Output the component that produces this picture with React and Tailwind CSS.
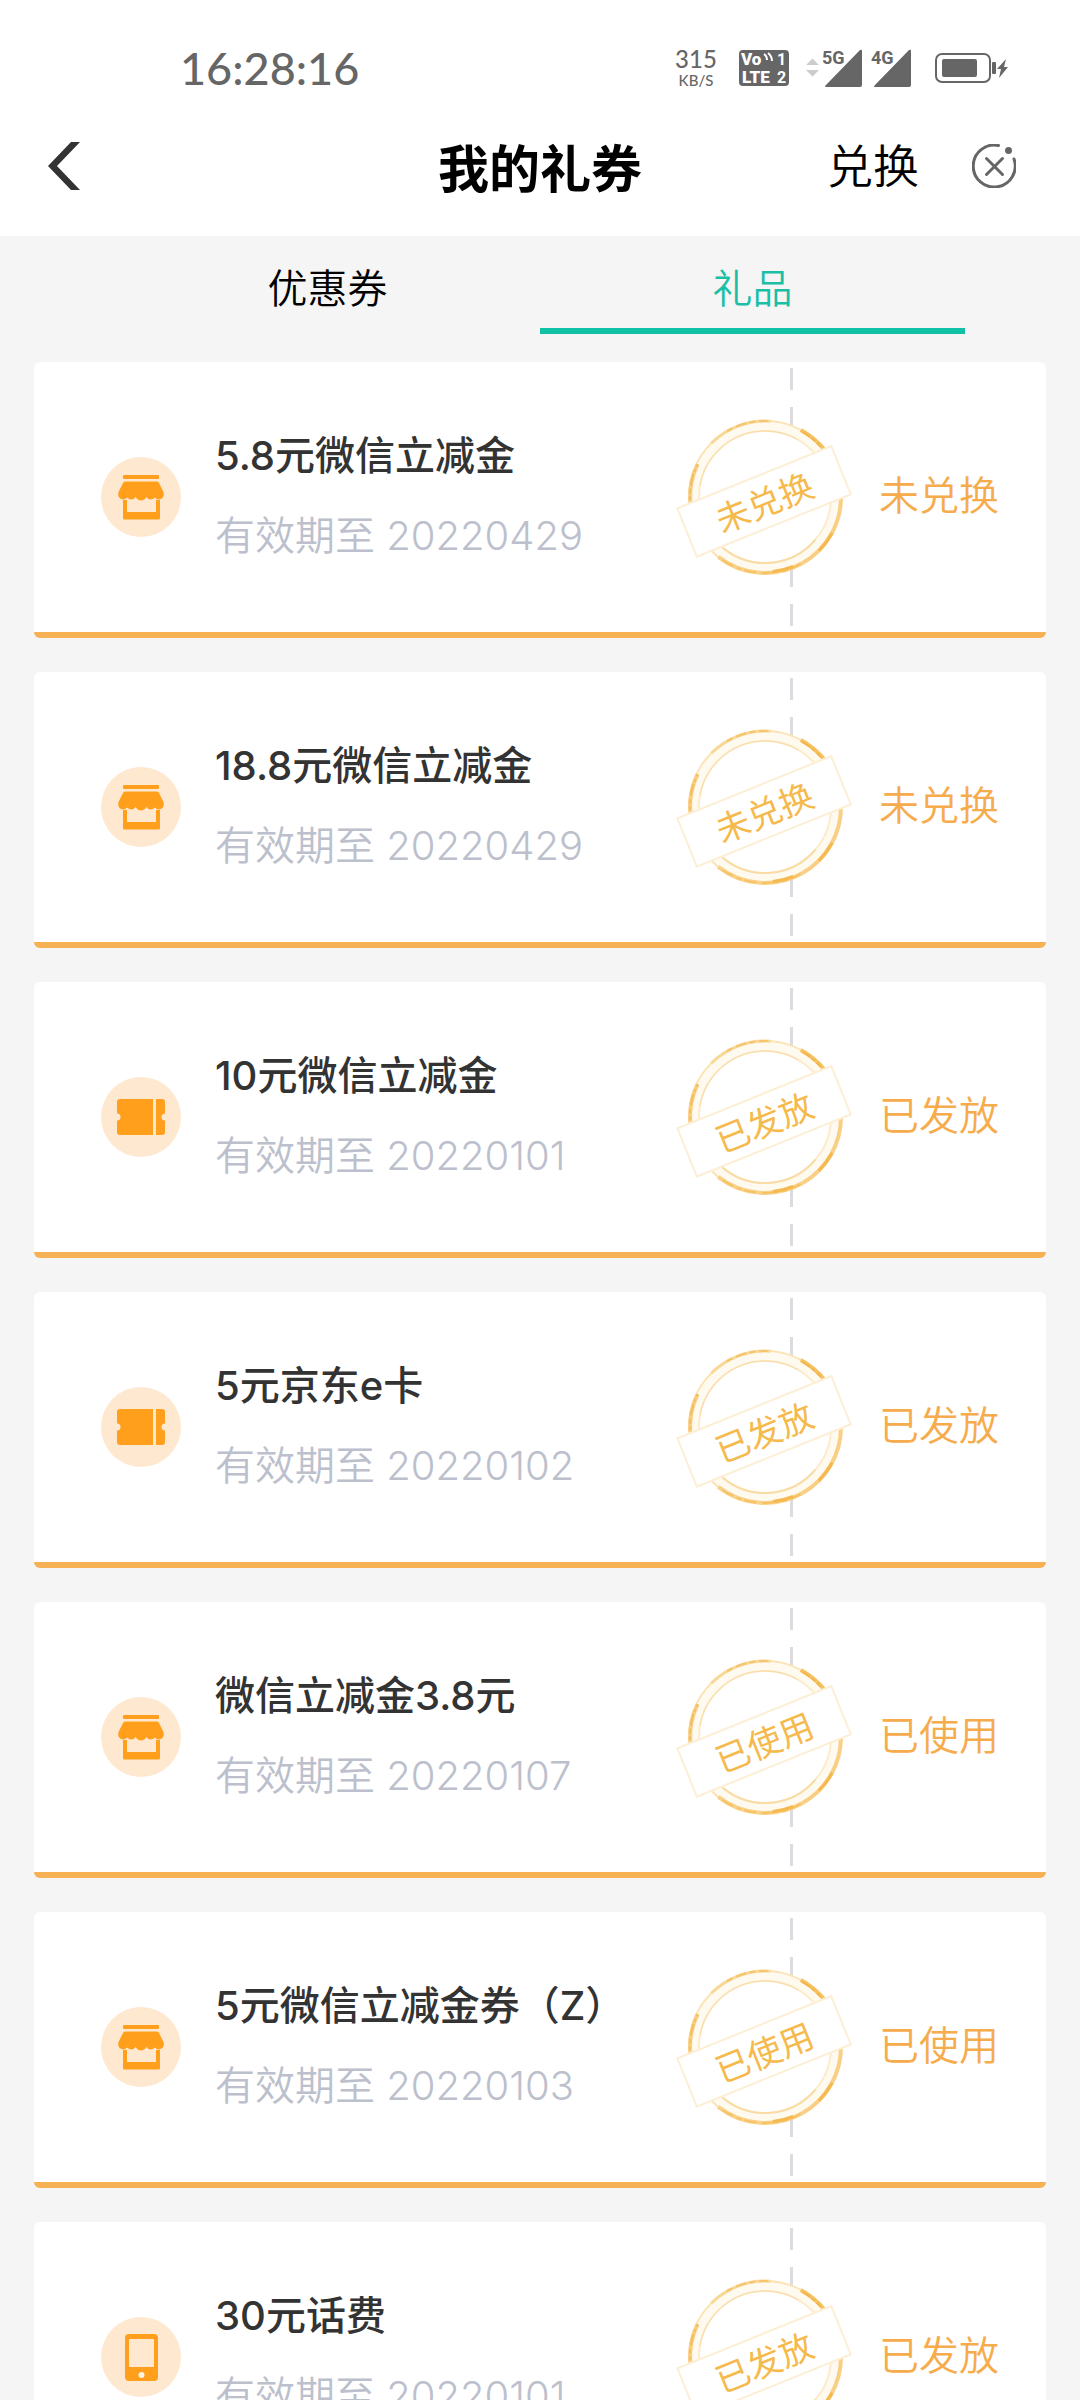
import React, { useState } from "react";

const gifts = [
  { icon: "store", title: "5.8元微信立减金", date: "20220429", status: "未兑换" },
  { icon: "store", title: "18.8元微信立减金", date: "20220429", status: "未兑换" },
  { icon: "ticket", title: "10元微信立减金", date: "20220101", status: "已发放" },
  { icon: "ticket", title: "5元京东e卡", date: "20220102", status: "已发放" },
  { icon: "store", title: "微信立减金3.8元", date: "20220107", status: "已使用" },
  { icon: "store", title: "5元微信立减金券（Z）", date: "20220103", status: "已使用" },
  { icon: "phone", title: "30元话费", date: "20220101", status: "已发放" },
];

function GiftIcon({ kind }) {
  return (
    <svg viewBox="0 0 80 80" className="size-20 shrink-0" aria-hidden="true">
      <circle cx="40" cy="40" r="40" fill="#ffe8d0" />
      {kind === "store" && (
        <g fill="#ff9f1c">
          <rect x="22" y="18" width="36" height="4" rx="1" />
          <path d="M24 24.500h32q1.500 0 2 1.500l4.500 9q1.500 6-4 7.500-3 .3-4.500-2-2 2-4.500 2T45.500 40q-2.500 3.500-5.500 3.500t-5.500-3.500Q33 42.500 30.500 42.500T26 40.500q-1.500 2.300-4.500 2-5.500-1.500-4-7.500l4.500-9q.5-1.500 2-1.500z" />
          <path d="M22 43h4v12h29V43h4v18q0 1.500-1.500 1.500h-34Q22 62.500 22 61z" />
        </g>
      )}
      {kind === "ticket" && (
        <g fill="#ff9f1c">
          <path d="M19 22h33v36H19q-3 0-3-3V43.500a3.500 3.500 0 0 0 0-7V25q0-3 3-3z" />
          <path d="M55 22h6q3 0 3 3v11.500a3.500 3.500 0 0 0 0 7V55q0 3-3 3h-6z" />
        </g>
      )}
      {kind === "phone" && (
        <>
          <rect x="24" y="17" width="33" height="47" rx="4" fill="#ff9f1c" />
          <rect x="28" y="22" width="25" height="28" rx="1" fill="#ffe8d0" />
          <circle cx="40.500" cy="58" r="3" fill="#fff3e4" />
        </>
      )}
    </svg>
  );
}

function arc(r, from, to) {
  const p = (a) => {
    const t = (a * Math.PI) / 180;
    return `${(90 + r * Math.cos(t)).toFixed(1)} ${(80 + r * Math.sin(t)).toFixed(1)}`;
  };
  return `M${p(from)}A${r} ${r} 0 0 1 ${p(to)}`;
}

function Stamp({ text }) {
  return (
    <svg viewBox="0 0 180 160" className="h-40 w-[180px]" role="img" aria-label={text}>
      <circle cx="90" cy="80" r="76" fill="#fff" />
      <g fill="none">
        <circle cx="90" cy="80" r="71" stroke="#fffaf0" strokeWidth="9" />
        <circle cx="90" cy="80" r="76" stroke="#fbe3b4" strokeWidth="2" />
        <circle cx="90" cy="80" r="66" stroke="#fdebcb" strokeWidth="2" />
        <path d={arc(66, 190, 300)} stroke="#f9dba4" strokeWidth="1" />
        <path d={arc(66, 40, 130)} stroke="#f9dba4" strokeWidth="2" />
        <path d={arc(76, 298, 322)} stroke="#f6c263" strokeWidth="4" />
        <path d={arc(75, 300, 318)} stroke="#f4b548" strokeWidth="2" strokeDasharray="9 2 4 3" />
        <path d={arc(76, 0, 60)} stroke="#f8cf85" strokeWidth="4" />
        <path d={arc(76, 28, 45)} stroke="#f5b94f" strokeWidth="3" />
        <path d={arc(76, 60, 128)} stroke="#f9d28a" strokeWidth="4" />
        <path d={arc(76, 62, 124)} stroke="#f6c263" strokeWidth="2" strokeDasharray="12 3 5 4 16 6" />
        <path d={arc(75, 68, 84)} stroke="#f5b94f" strokeWidth="3" />
        <path d={arc(75, 176, 206)} stroke="#f8cf85" strokeWidth="4" />
        <path d={arc(75, 178, 206)} stroke="#f5bd5c" strokeWidth="2" strokeDasharray="3 3 5 3 12 2" />
        <path d={arc(76, 225, 274)} stroke="#f9d795" strokeWidth="3" />
        <path d={arc(76, 240, 272)} stroke="#f5c46c" strokeWidth="2" strokeDasharray="6 4 11 3" />
      </g>
      <g transform="rotate(-22 90 84)">
        <rect x="6" y="58" width="166" height="52" fill="#fff" stroke="#fcefd6" strokeWidth="2" />
        <text x="89" y="98" textAnchor="middle" fontSize="34" fill="#f5b94c">
          {text}
        </text>
      </g>
    </svg>
  );
}

function GiftCard({ gift }) {
  return (
    <li className="relative flex h-[276px] shrink-0 items-center rounded-md border-b-[6px] border-[#f6b155] bg-white">
      <div className="flex min-w-0 flex-1 items-center gap-[34px] pl-[67px]">
        <GiftIcon kind={gift.icon} />
        <div className="whitespace-nowrap pb-[2px] text-[40px] leading-[80px]">
          <h2 className="font-medium text-[#333]">{gift.title}</h2>
          <p className="font-[350] text-[#bcc0cc]">有效期至 {gift.date}</p>
        </div>
      </div>
      <div className="flex h-full flex-col justify-between py-[6px]" aria-hidden="true">
        {[0, 1, 2, 3, 4, 5, 6].map((n) => (
          <span key={n} className="h-[22px] w-[3px] bg-[#dcdce0]" />
        ))}
      </div>
      <p className="w-[253px] pb-[2px] pl-[86px] text-[40px] leading-[80px] font-[350] text-[#f6ac4c]">{gift.status}</p>
      <div className="absolute top-1/2 right-[191px] -translate-y-1/2">
        <Stamp text={gift.status} />
      </div>
    </li>
  );
}

function StatusBar() {
  return (
    <div className="flex h-[90px] items-end justify-between pr-[71px] pl-[180px] text-[#666]">
      <time className="font-['Lato'] text-[45px] leading-[44px] font-medium">16:28:16</time>
      <div className="flex h-11 items-center">
        <div className="flex w-[44px] flex-col items-center font-['Lato'] font-medium">
          <span className="text-[24px] leading-[24px]">315</span>
          <span className="text-[15px] leading-[18px]">KB/S</span>
        </div>
        <svg viewBox="0 0 50 36" className="ml-[21px] h-9 w-[50px]" role="img" aria-label="VoLTE">
          <rect width="50" height="36" rx="4" fill="#666" />
          <g fill="#fff" fontFamily="Roboto, sans-serif" fontWeight="900">
            <text x="2" y="15" fontSize="17">Vo</text>
            <text x="3" y="33" fontSize="17">LTE</text>
            <text x="38" y="15" fontSize="16" fontWeight="700">1</text>
            <text x="38" y="33" fontSize="16" fontWeight="700">2</text>
          </g>
          <path d="M25 4q3 2 3 6M29 3q4 3 4 8" fill="none" stroke="#fff" strokeWidth="2" />
        </svg>
        <svg viewBox="0 0 106 42" className="ml-[17px] h-[42px] w-[106px]" role="img" aria-label="5G 4G">
          <path d="M0 18l6.500-6.500L13 18zM0 23h13l-6.500 6.500z" fill="#ccc" />
          <path d="M20 40q-2 0 0-2L54 3q2-1 2 1v34q0 2-2 2zM69 40q-2 0 0-2L103 3q2-1 2 1v34q0 2-2 2z" fill="#666" />
          <g fill="#666" fontFamily="Roboto, sans-serif" fontWeight="700" fontSize="18">
            <text x="16" y="17">5G</text>
            <text x="65" y="17">4G</text>
          </g>
        </svg>
        <svg viewBox="0 0 74 30" className="ml-[23px] h-[30px] w-[74px]" role="img" aria-label="充电中">
          <rect x="1" y="1" width="54" height="28" rx="6" fill="none" stroke="#666" strokeWidth="2" />
          <rect x="7" y="6" width="35" height="18" rx="2" fill="#666" />
          <rect x="57" y="9" width="4" height="12" rx="1" fill="#666" />
          <path d="M71 6l-9 10h4l-2 9 9-11h-4z" fill="#666" />
        </svg>
      </div>
    </div>
  );
}

export default function App() {
  const [tab, setTab] = useState("礼品");
  return (
    <div className="flex h-screen flex-col overflow-hidden bg-[#f5f5f5] font-['Inter','Noto_Sans_CJK_SC',sans-serif]">
      <header className="shrink-0 bg-white">
        <StatusBar />
        <div className="grid h-[146px] grid-cols-[1fr_auto_1fr] items-center px-12 pt-[6px] text-black">
          <button type="button" aria-label="返回" className="justify-self-start">
            <svg viewBox="0 0 32 48" className="h-12 w-8">
              <path d="M23 0h9L9 24l23 24h-9L0 24z" fill="#333" />
            </svg>
          </button>
          <h1 className="pt-2 text-[51px] leading-[64px] font-bold">我的礼券</h1>
          <div className="flex items-center gap-[53px] justify-self-end pr-4">
            <button type="button" className="text-[46px] leading-[64px] font-[350]">兑换</button>
            <button type="button" aria-label="关闭">
              <svg viewBox="0 0 44 44" className="size-11" fill="none" stroke="#666" strokeWidth="3">
                <path d="M26.500 1.500A21 21 0 1 0 42 15" strokeLinecap="round" />
                <path d="M14.500 14.500l16 16M30.500 14.500l-16 16" strokeWidth="3" strokeLinecap="round" />
                <circle cx="36.500" cy="6.500" r="3.500" fill="#666" stroke="none" />
              </svg>
            </button>
          </div>
        </div>
      </header>
      <nav className="flex h-[98px] shrink-0 px-[115px]" role="tablist">
        {["优惠券", "礼品"].map((name) => (
          <button
            key={name}
            type="button"
            role="tab"
            aria-selected={tab === name}
            onClick={() => setTab(name)}
            className={
              "flex-1 border-b-[6px] pt-[14px] text-[40px] leading-[78px] font-[350] " +
              (tab === name ? "border-[#0fc1a5] text-[#1abfa5]" : "border-transparent text-black")
            }
          >
            {name}
          </button>
        ))}
      </nav>
      <ul className="mt-7 flex min-h-0 flex-1 flex-col gap-[34px] overflow-y-auto px-[34px] [scrollbar-width:none]">
        {gifts.map((gift) => (
          <GiftCard key={gift.title} gift={gift} />
        ))}
      </ul>
    </div>
  );
}
